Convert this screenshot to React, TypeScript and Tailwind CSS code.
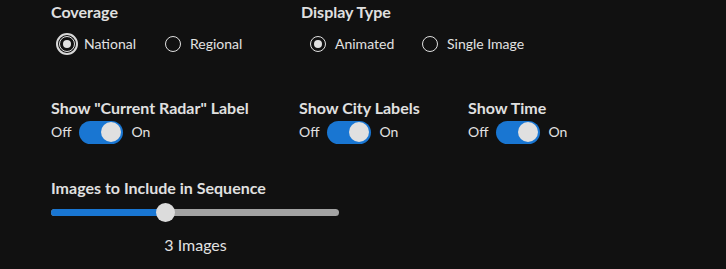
import React from "react";

const font = { fontFamily: "Lato, 'Noto Sans', sans-serif" };

function Radio({ label, checked, focused }: { label: string; checked?: boolean; focused?: boolean }) {
  return (
    <div className="flex items-center h-[22px]">
      <div className="relative w-[22px] h-[22px] flex items-center justify-center shrink-0">
        {focused && <div className="absolute inset-0 rounded-full border-2 border-[#d8d8d8]" />}
        <div className="w-[16px] h-[16px] rounded-full border-[1.5px] border-[#e0e0e0] flex items-center justify-center">
          {checked && <div className="w-[8px] h-[8px] rounded-full bg-[#e0e0e0]" />}
        </div>
      </div>
      <span className="ml-[6px] text-[14px] leading-[18px] text-[#e2e2e2] whitespace-nowrap">{label}</span>
    </div>
  );
}

function Toggle() {
  return (
    <div className="flex items-center h-[24px]">
      <span className="text-[14px] leading-[18px] text-[#e2e2e2]">Off</span>
      <div className="ml-[8px] w-[44px] h-[23px] rounded-full bg-[#1976d2] flex items-center justify-end pr-[2px]">
        <div className="w-[20px] h-[20px] rounded-full bg-[#e0e0e0]" />
      </div>
      <span className="ml-[8px] text-[14px] leading-[18px] text-[#e2e2e2]">On</span>
    </div>
  );
}

export default function App() {
  return (
    <div className="w-[726px] h-[269px] bg-[#111111] pl-[51px] pt-[2px] overflow-hidden" style={font}>
      <div className="flex">
        <div className="w-[250px]">
          <div className="text-[16px] leading-[19px] font-bold text-[#e0e0e0]">Coverage</div>
          <div className="flex mt-[12px] ml-[5px]">
            <div className="w-[106px]"><Radio label="National" checked focused /></div>
            <Radio label="Regional" />
          </div>
        </div>
        <div>
          <div className="text-[16px] leading-[19px] font-bold text-[#e0e0e0]">Display Type</div>
          <div className="flex mt-[12px] ml-[6px]">
            <div className="w-[112px]"><Radio label="Animated" checked /></div>
            <Radio label="Single Image" />
          </div>
        </div>
      </div>

      <div className="flex mt-[43px]">
        <div className="w-[248px]">
          <div className="text-[16px] leading-[19px] font-bold text-[#e0e0e0]">Show "Current Radar" Label</div>
          <div className="mt-[3px]"><Toggle /></div>
        </div>
        <div className="w-[169px]">
          <div className="text-[16px] leading-[19px] font-bold text-[#e0e0e0]">Show City Labels</div>
          <div className="mt-[3px]"><Toggle /></div>
        </div>
        <div>
          <div className="text-[16px] leading-[19px] font-bold text-[#e0e0e0]">Show Time</div>
          <div className="mt-[3px]"><Toggle /></div>
        </div>
      </div>

      <div className="mt-[34px] w-[288px]">
        <div className="text-[16px] leading-[19px] font-bold text-[#e0e0e0]">Images to Include in Sequence</div>
        <div className="relative mt-[5px] h-[20px] flex items-center">
          <div className="w-full h-[7px] rounded-full bg-[#a3a3a3] flex">
            <div className="w-[114px] h-full rounded-l-full bg-[#1976d2]" />
          </div>
          <div className="absolute left-[105px] top-[1px] w-[19px] h-[19px] rounded-full bg-[#dcdcdc]" />
        </div>
        <div className="mt-[13px] text-center text-[16px] leading-[19px] text-[#e2e2e2] pl-[1px]">3 Images</div>
      </div>
    </div>
  );
}
